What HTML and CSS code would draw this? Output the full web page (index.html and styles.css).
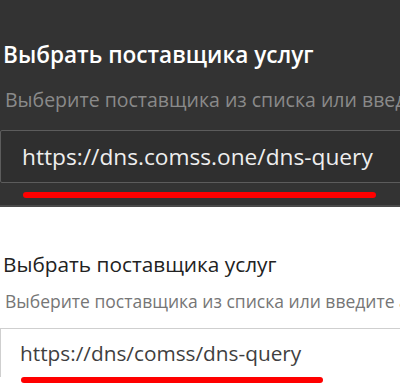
FILE: index.html
```html
<!DOCTYPE html>
<html lang="ru">
<head>
  <meta charset="UTF-8" />
  <meta name="viewport" content="width=device-width, initial-scale=1.0"/>
  <title>Поставщик DNS</title>
  <link rel="stylesheet" href="styles.css">
</head>
<body>
  <div class="panel dark">
    <h2 class="title">Выбрать поставщика услуг</h2>
    <p class="hint">Выберите поставщика из списка или введите</p>
    <div class="field">
      <span class="value">https://dns.comss.one/dns-query</span>
    </div>
    <div class="mark"></div>
  </div>

  <div class="panel light">
    <h2 class="title">Выбрать поставщика услуг</h2>
    <p class="hint">Выберите поставщика из списка или введите адрес</p>
    <div class="field">
      <span class="value">https://dns/comss/dns-query</span>
    </div>
    <div class="mark"></div>
  </div>
</body>
</html>
```

FILE: styles.css
```css
body {
  margin: 0;
  padding: 0;
  width: 400px;
  height: 392px;
  overflow: hidden;
  font-family: 'Open Sans', 'Noto Sans', sans-serif;
}
.panel {
  overflow: hidden;
  white-space: nowrap;
}
.title {
  margin: 0;
  padding-left: 3px;
}
.hint {
  margin: 0;
  padding-left: 5px;
}
.field {
  width: 440px;
  display: flex;
  align-items: center;
  box-sizing: border-box;
}
.mark {
  background-color: #f00;
  border-radius: 3px;
}

/* dark theme */
.dark {
  height: 207px;
  background-color: #333;
  border-bottom: 2px solid #4a4a4a;
  padding-top: 39px;
  box-sizing: border-box;
}
.dark .title {
  color: #fff;
  font-size: 22.6px;
  font-weight: 600;
  line-height: 32px;
}
.dark .hint {
  color: #8a8a8a;
  font-size: 19.5px;
  line-height: 26px;
  margin-top: 16px;
}
.dark .field {
  height: 53px;
  margin-top: 17px;
  border: 1px solid #5c5c5c;
  border-radius: 2px;
  background-color: #2f2f2f;
  padding-left: 21px;
}
.dark .value {
  color: #eee;
  font-size: 22.7px;
}
.dark .mark {
  width: 353px;
  height: 6px;
  margin: 9px 0 0 23px;
}

/* light theme */
.light {
  height: 183px;
  background-color: #fff;
  padding-top: 42px;
  box-sizing: border-box;
}
.light .title {
  color: #222;
  font-size: 20.8px;
  font-weight: 400;
  line-height: 30px;
}
.light .hint {
  color: #767676;
  font-size: 17.5px;
  line-height: 24px;
  margin-top: 10px;
}
.light .field {
  height: 49px;
  margin-top: 15px;
  border: 1px solid #cfcfcf;
  border-bottom: none;
  background-color: #fff;
  padding-left: 19px;
}
.light .value {
  color: #3f3f3f;
  font-size: 20.8px;
}
.light .mark {
  width: 302px;
  height: 6px;
  margin: 0 0 0 21px;
}
```
